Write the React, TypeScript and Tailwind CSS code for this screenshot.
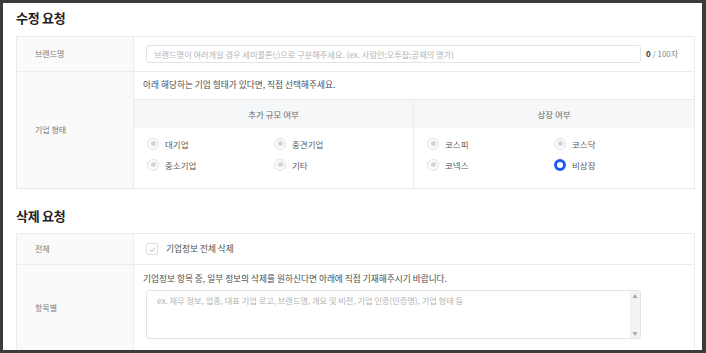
import React from "react";

const font = { fontFamily: '"Noto Sans CJK KR", "Noto Sans", sans-serif' };

function Radio({ label, checked = false }: { label: string; checked?: boolean }) {
  return (
    <div className="flex h-[21px] items-center gap-[6px]">
      {checked ? (
        <span className="h-[12px] w-[12px] rounded-full border-[3px] border-[#1d5bf0] bg-white" />
      ) : (
        <span className="flex h-[12px] w-[12px] items-center justify-center rounded-full border border-[#e3e3e3] bg-[#fafafa]">
          <span className="h-[5px] w-[5px] rounded-full bg-[#d6d6d6]" />
        </span>
      )}
      <span className="text-[8.5px] leading-[12px] text-[#5a5a5a]">{label}</span>
    </div>
  );
}

function Label({ children }: { children: React.ReactNode }) {
  return (
    <div className="flex w-[117px] shrink-0 items-center border-r border-[#ebebeb] bg-[#fafafa] pl-[18px] text-[8px] text-[#7a7a7a]">
      {children}
    </div>
  );
}

export default function App() {
  return (
    <div className="h-[353px] w-[706px] bg-[#3b3b3b] pl-[3px] pt-[3px]" style={font}>
      <div className="h-[347px] w-[699px] overflow-hidden bg-white pl-[13px] pr-[7px] pt-[7px]">
        <h2 className="mb-[10px] text-[13px] font-bold leading-[16px] tracking-[-0.02em] text-[#222]">수정 요청</h2>
        <div className="border border-[#ebebeb]">
          <div className="flex h-[35px] border-b border-[#ebebeb]">
            <Label>브랜드명</Label>
            <div className="flex flex-1 items-center px-[12px]">
              <div className="flex h-[18px] flex-1 items-center rounded-[3px] border border-[#e3e3e3] pl-[7px] text-[8.2px] text-[#b3b3b3]">
                브랜드명이 여러개일 경우 세미콜론(;)으로 구분해주세요. (ex. 사람인;오투잡;공채의 명가)
              </div>
              <div className="ml-[5px] w-[36px] text-[8px] text-[#888]">
                <span className="font-bold text-[#333]">0</span> / 100자
              </div>
            </div>
          </div>
          <div className="flex">
            <Label>기업 형태</Label>
            <div className="flex-1">
              <p className="pl-[9px] pt-[7px] text-[8.7px] leading-[12px] text-[#4d4d4d]">
                아래 해당하는 기업 형태가 있다면, 직접 선택해주세요.
              </p>
              <div className="mt-[8px] grid grid-cols-2 border-t border-[#ebebeb]">
                <div className="border-r border-[#ebebeb]">
                  <div className="flex h-[28px] items-center justify-center bg-[#f6f7f9] text-[8.5px] text-[#6a6a6a]">추가 규모 여부</div>
                  <div className="grid grid-cols-[127px_127px] pb-[13px] pl-[13px] pt-[5px]">
                    <Radio label="대기업" />
                    <Radio label="중견기업" />
                    <Radio label="중소기업" />
                    <Radio label="기타" />
                  </div>
                </div>
                <div>
                  <div className="flex h-[28px] items-center justify-center bg-[#f6f7f9] text-[8.5px] text-[#6a6a6a]">상장 여부</div>
                  <div className="grid grid-cols-[127px_127px] pb-[13px] pl-[13px] pt-[5px]">
                    <Radio label="코스피" />
                    <Radio label="코스닥" />
                    <Radio label="코넥스" />
                    <Radio label="비상장" checked />
                  </div>
                </div>
              </div>
            </div>
          </div>
        </div>

        <h2 className="mb-[9px] mt-[19px] text-[13px] font-bold leading-[16px] tracking-[-0.02em] text-[#222]">삭제 요청</h2>
        <div className="border border-[#ebebeb]">
          <div className="flex h-[31px] border-b border-[#ebebeb]">
            <Label>전체</Label>
            <div className="flex flex-1 items-center gap-[8px] pl-[12px]">
              <span className="flex h-[12px] w-[12px] items-center justify-center rounded-[2px] border border-[#dedede] bg-white">
                <svg viewBox="0 0 12 12" className="h-[9px] w-[9px]" fill="none" stroke="#d0d0d0" strokeWidth="1.6">
                  <path d="M2.5 6.2 5 8.5 9.5 3.5" />
                </svg>
              </span>
              <span className="text-[8.7px] text-[#4d4d4d]">기업정보 전체 삭제</span>
            </div>
          </div>
          <div className="flex h-[86px]">
            <Label>항목별</Label>
            <div className="flex-1 pl-[9px] pt-[8px]">
              <p className="text-[8.7px] leading-[12px] text-[#4d4d4d]">
                기업정보 항목 중, 일부 정보의 삭제를 원하신다면 아래에 직접 기재해주시기 바랍니다.
              </p>
              <div className="ml-[3px] mt-[5px] flex h-[49px] w-[495px] rounded-[3px] border border-[#e3e3e3]">
                <div className="flex-1 pl-[10px] pt-[3px] text-[8.2px] leading-[12px] text-[#b3b3b3]">
                  ex. 재무 정보, 업종, 대표 기업 로고, 브랜드명, 개요 및 비전, 기업 인증(인증명), 기업 형태 등
                </div>
                <div className="flex w-[10px] flex-col items-center justify-between rounded-r-[3px] bg-[#f3f3f3] py-[2px] text-[5px] leading-[6px] text-[#aaa]">
                  <span>▲</span>
                  <span>▼</span>
                </div>
              </div>
            </div>
          </div>
        </div>
      </div>
    </div>
  );
}
